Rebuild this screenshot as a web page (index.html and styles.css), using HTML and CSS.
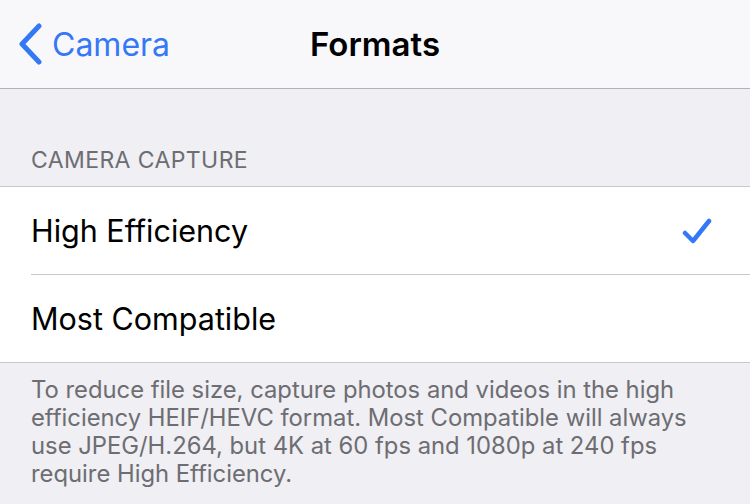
FILE: index.html
```html
<!DOCTYPE html>
<html>
<head>
<meta charset="utf-8">
<link rel="stylesheet" href="styles.css">
</head>
<body>
<div class="screen">
  <header class="nav">
    <div class="back">
      <svg class="chev" width="26" height="42" viewBox="0 0 26 42"><path d="M22 3 L5 21 L22 39" fill="none" stroke="#3478f6" stroke-width="5" stroke-linecap="round" stroke-linejoin="round"/></svg>
      <span class="back-label">Camera</span>
    </div>
    <div class="title">Formats</div>
  </header>
  <div class="section-header">CAMERA CAPTURE</div>
  <div class="group">
    <div class="row">
      <span class="label">High Efficiency</span>
      <svg class="check" width="30" height="28" viewBox="0 0 30 28"><path d="M3 16 L11 24 L27 4" fill="none" stroke="#3478f6" stroke-width="4.5" stroke-linecap="round" stroke-linejoin="round"/></svg>
    </div>
    <div class="row last">
      <span class="label">Most Compatible</span>
    </div>
  </div>
  <div class="footer">To reduce file size, capture photos and videos in the high efficiency HEIF/HEVC format. Most Compatible will always use JPEG/H.264, but 4K at 60 fps and 1080p at 240 fps require High Efficiency.</div>
</div>
</body>
</html>
```
FILE: styles.css
```css
html, body { margin: 0; padding: 0; }
body {
  width: 750px;
  height: 504px;
  overflow: hidden;
  background: #efeff4;
  font-family: "Inter", "Liberation Sans", sans-serif;
}
.screen { display: flex; flex-direction: column; }
.nav {
  height: 88px;
  background: #f8f8fa;
  border-bottom: 1px solid #b2b2b2;
  display: flex;
  align-items: center;
  justify-content: center;
  position: relative;
}
.back {
  position: absolute;
  left: 17px;
  top: 23px;
  display: flex;
  align-items: center;
  gap: 9px;
  color: #3478f6;
}
.back-label { font-size: 32px; }
.title { font-size: 33px; font-weight: 600; color: #000; }
.section-header {
  height: 98px;
  box-sizing: border-box;
  padding: 0 31px 12px;
  display: flex;
  align-items: flex-end;
  font-size: 23px;
  color: #6d6d72;
  letter-spacing: 0.4px;
  border-bottom: 1px solid #c8c7cc;
}
.group { background: #fff; border-bottom: 1px solid #c8c7cc; }
.row {
  height: 87px;
  margin-left: 31px;
  padding-right: 38px;
  display: flex;
  align-items: center;
  justify-content: space-between;
  border-bottom: 1px solid #c8c7cc;
}
.row.last { border-bottom: none; }
.label { font-size: 30.5px; color: #000; }
.footer {
  padding: 13px 31px 0;
  font-size: 23.8px;
  line-height: 28px;
  color: #6d6d72;
}
```
